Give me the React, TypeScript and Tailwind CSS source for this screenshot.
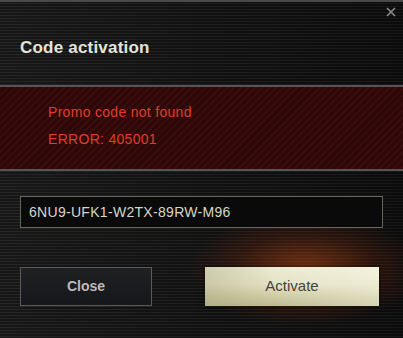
import React from "react";

// Scanline background used across the dialog
const scan =
  "bg-[repeating-linear-gradient(to_bottom,#202020_0px,#202020_1px,#0f0f0f_1px,#0f0f0f_3px)]";

const App: React.FC = () => {
  return (
    <div
      className={`relative w-[403px] h-[338px] overflow-hidden ${scan} font-['Liberation_Sans',_sans-serif]`}
    >
      {/* shading + glow overlays */}
      <div className="pointer-events-none absolute inset-0 bg-[linear-gradient(to_right,rgba(255,255,255,0.03),rgba(0,0,0,0.25))]" />
      <div className="pointer-events-none absolute left-[190px] top-[215px] w-[230px] h-[110px] bg-[radial-gradient(ellipse_at_center,rgba(200,80,20,0.55)_0%,rgba(130,40,10,0.25)_45%,transparent_72%)]" />

      <div className="relative flex flex-col h-full border-t-2 border-[#4a4a4a]">
        {/* close */}
        <button className="absolute right-[5px] top-[4px] w-[12px] h-[12px] text-[#8a8a8a]">
          <svg viewBox="0 0 10 10" className="w-[10px] h-[10px]">
            <path d="M1 1 L9 9 M9 1 L1 9" stroke="currentColor" strokeWidth="1.6" />
          </svg>
        </button>

        {/* title */}
        <div className="h-[83px] flex items-center pl-[20px] pt-[8px]">
          <h1 className="text-[17px] font-bold text-[#e4e4da] tracking-[0.2px]">
            Code activation
          </h1>
        </div>

        {/* error panel */}
        <div className="h-[86px] border-y-2 border-[#555] bg-[repeating-linear-gradient(135deg,#3a0c0c_0px,#3a0c0c_2px,#2e0808_2px,#2e0808_5px)] flex flex-col justify-center gap-[13px] pl-[48px] pb-[6px]">
          <p className="text-[14px] text-[#de3f2a] leading-none tracking-[0.3px]">Promo code not found</p>
          <p className="text-[14px] text-[#de3f2a] leading-none tracking-[0.3px]">ERROR: 405001</p>
        </div>

        {/* input */}
        <div className="px-[20px] pt-[25px]">
          <div className="h-[32px] w-[363px] border border-[#66665e] bg-[#0a0a0a] flex items-center pl-[8px]">
            <span className="text-[14px] text-[#d6d6cc] tracking-[0.3px]">
              6NU9-UFK1-W2TX-89RW-M96
            </span>
          </div>
        </div>

        {/* buttons */}
        <div className="flex items-start pl-[20px] pt-[39px] gap-[53px]">
          <button className="w-[132px] h-[39px] border border-[#5a5a5a] bg-[linear-gradient(to_bottom,#1e2022,#15171a)] text-[14px] font-bold text-[#bcbcbc]">
            Close
          </button>
          <button className="relative w-[174px] h-[39px] bg-[linear-gradient(to_bottom,#ecebd4_0%,#e4e2c4_45%,#cfcca6_75%,#bebb94_100%)] shadow-[0_0_6px_rgba(0,0,0,0.6)] text-[15px] text-[#45433a] overflow-hidden">
            <span className="absolute inset-0 bg-[linear-gradient(to_right,rgba(150,150,110,0.35),transparent_40%,rgba(255,255,240,0.35))]" />
            <span className="relative">Activate</span>
          </button>
        </div>
      </div>
    </div>
  );
};

export default App;
